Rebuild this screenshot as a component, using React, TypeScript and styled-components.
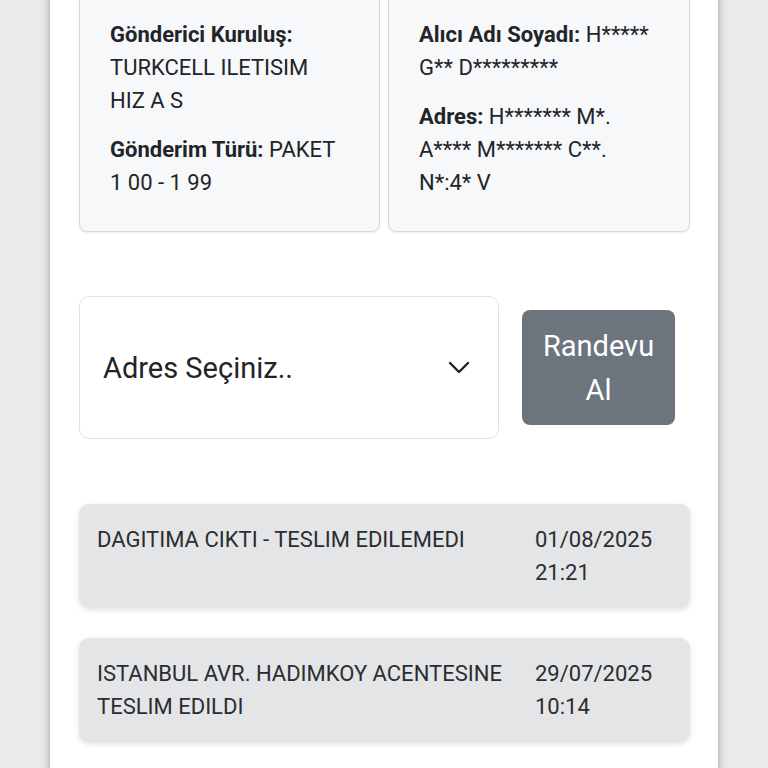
import styled, { createGlobalStyle } from "styled-components";

const GlobalStyle = createGlobalStyle`
  html, body {
    margin: 0;
    padding: 0;
    background: #ebebeb;
    font-family: Roboto, "Liberation Sans", sans-serif;
    color: #212529;
    overflow: hidden;
  }
`;

const Page = styled.div`
  width: 768px;
  height: 768px;
  overflow: hidden;
`;

const Panel = styled.main`
  width: 668px;
  height: 800px;
  margin-left: 50px;
  background: #fff;
  box-shadow: 0 0 8px rgba(0, 0, 0, 0.35);
  padding: 0 28px 0 29px;
  box-sizing: border-box;
`;

const InfoGrid = styled.section`
  display: grid;
  grid-template-columns: 301px 302px;
  gap: 8px;
  margin-top: -10px;
`;

const InfoCard = styled.div`
  background: #f7f8fa;
  border: 1px solid #d6d8db;
  border-radius: 8px;
  box-shadow: 0 1px 2px rgba(0, 0, 0, 0.08);
  padding: 27px 16px 32px 30px;
  font-size: 22px;
  line-height: 33px;
`;

const InfoLine = styled.p`
  margin: 0;
  & + & {
    margin-top: 16px;
  }
  strong {
    font-weight: 700;
  }
`;

const ActionRow = styled.section`
  display: grid;
  grid-template-columns: 420px 153px;
  gap: 23px;
  align-items: center;
  margin-top: 64px;
`;

const SelectBox = styled.div`
  height: 143px;
  box-sizing: border-box;
  border: 1px solid #dfe1e4;
  border-radius: 10px;
  display: flex;
  align-items: center;
  justify-content: space-between;
  padding: 0 28px 0 23px;
  font-size: 29px;
  color: #212529;
`;

const Chevron = styled.svg`
  width: 22px;
  height: 14px;
`;

const Button = styled.button`
  height: 115px;
  border: none;
  border-radius: 8px;
  background: #6c757d;
  color: #fff;
  font-family: Roboto, "Liberation Sans", sans-serif;
  font-size: 29px;
  line-height: 44px;
  padding: 0 10px;
`;

const Events = styled.section`
  display: flex;
  flex-direction: column;
  gap: 30px;
  margin-top: 65px;
`;

const EventCard = styled.div`
  display: grid;
  grid-template-columns: 1fr 137px;
  column-gap: 20px;
  background: #e4e5e7;
  border-radius: 10px;
  box-shadow: 0 2px 6px rgba(0, 0, 0, 0.12);
  padding: 19px 18px 19px;
  font-size: 22px;
  line-height: 33px;
  color: #2a2d31;
`;

const EventText = styled.div``;

const EventDate = styled.div``;

const events = [
  { text: "DAGITIMA CIKTI - TESLIM EDILEMEDI", date: "01/08/2025", time: "21:21" },
  {
    text: "ISTANBUL AVR. HADIMKOY ACENTESINE TESLIM EDILDI",
    date: "29/07/2025",
    time: "10:14",
  },
];

export default function App() {
  return (
    <Page>
      <GlobalStyle />
      <Panel>
        <InfoGrid>
          <InfoCard>
            <InfoLine>
              <strong>Gönderici Kuruluş:</strong>
              <br />
              TURKCELL ILETISIM
              <br />
              HIZ A S
            </InfoLine>
            <InfoLine>
              <strong>Gönderim Türü:</strong> PAKET
              <br />1 00 - 1 99
            </InfoLine>
          </InfoCard>
          <InfoCard>
            <InfoLine>
              <strong>Alıcı Adı Soyadı:</strong> H*****
              <br />
              G** D*********
            </InfoLine>
            <InfoLine>
              <strong>Adres:</strong> H******* M*.
              <br />
              A**** M******* C**.
              <br />
              N*:4* V
            </InfoLine>
          </InfoCard>
        </InfoGrid>

        <ActionRow>
          <SelectBox>
            <span>Adres Seçiniz..</span>
            <Chevron viewBox="0 0 22 14" fill="none">
              <path d="M2 2l9 9 9-9" stroke="#222" strokeWidth="2.4" strokeLinecap="round" strokeLinejoin="round" />
            </Chevron>
          </SelectBox>
          <Button>Randevu Al</Button>
        </ActionRow>

        <Events>
          {events.map((e) => (
            <EventCard key={e.date}>
              <EventText>{e.text}</EventText>
              <EventDate>
                {e.date}
                <br />
                {e.time}
              </EventDate>
            </EventCard>
          ))}
        </Events>
      </Panel>
    </Page>
  );
}
